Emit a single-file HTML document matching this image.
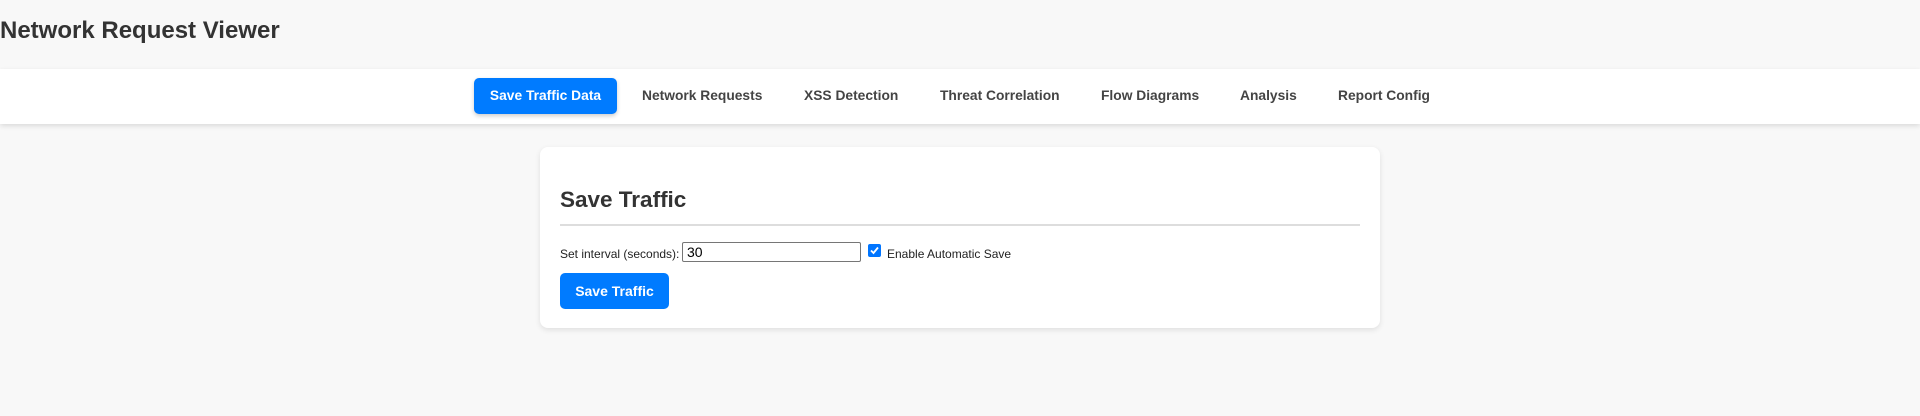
<!DOCTYPE html>
<html><head><meta charset="utf-8"><style>
*{box-sizing:border-box}
body{margin:0;width:1920px;height:416px;background:#f8f8f8;font-family:"Liberation Sans",Arial,sans-serif;color:#333;position:relative;overflow:hidden}
h1{position:absolute;left:0;top:17px;margin:0;font-size:24px;font-weight:bold;color:#333}
.nav{position:absolute;left:0;top:69px;width:1920px;height:55px;background:#fff;box-shadow:0 2px 5px rgba(0,0,0,.12)}
.nav span{position:absolute;top:19px;font-size:13.8px;font-weight:bold;color:#444;white-space:nowrap}
.nav .act{left:474px;top:9px;width:143px;height:36px;background:#007bff;color:#fff;border-radius:5px;text-align:center;line-height:36px;box-shadow:0 2px 4px rgba(0,0,0,.2)}
.card{position:absolute;left:540px;top:147px;width:840px;height:181px;background:#fff;border-radius:8px;box-shadow:0 2px 6px rgba(0,0,0,.1)}
.card h2{position:absolute;left:20px;top:40px;margin:0;font-size:22.5px;font-weight:bold;color:#333}
.hr{position:absolute;left:20px;top:77px;width:800px;height:2px;background:#ddd}
.lbl{position:absolute;left:20px;top:100px;font-size:12px;color:#222;white-space:nowrap}
.inp{position:absolute;left:142px;top:95px;width:179px;height:20px;border:1px solid #767676;border-radius:2px;font-size:14px;padding:1px 4px;color:#000;line-height:16px;background:#fff}
.cb{position:absolute;left:328px;top:97px;width:13px;height:13px;background:#0075ff;border-radius:2px}
.cb svg{position:absolute;left:1px;top:1px}
.cbl{position:absolute;left:347px;top:100px;font-size:12px;color:#222}
.btn{position:absolute;left:20px;top:126px;width:109px;height:36px;background:#007bff;color:#fff;border-radius:5px;font-size:14px;font-weight:bold;text-align:center;line-height:36px}
</style></head><body>
<h1>Network Request Viewer</h1>
<div class="nav">
<span class="act">Save Traffic Data</span>
<span style="left:642px">Network Requests</span>
<span style="left:804px">XSS Detection</span>
<span style="left:940px">Threat Correlation</span>
<span style="left:1101px">Flow Diagrams</span>
<span style="left:1240px">Analysis</span>
<span style="left:1338px">Report Config</span>
</div>
<div class="card">
<h2>Save Traffic</h2>
<div class="hr"></div>
<div class="lbl">Set interval (seconds):</div>
<div class="inp">30</div>
<div class="cb"><svg width="11" height="11" viewBox="0 0 11 11"><path d="M2 5.5 L4.5 8 L9 2.5" stroke="#fff" stroke-width="1.8" fill="none"/></svg></div>
<div class="cbl">Enable Automatic Save</div>
<div class="btn">Save Traffic</div>
</div>
</body></html>
